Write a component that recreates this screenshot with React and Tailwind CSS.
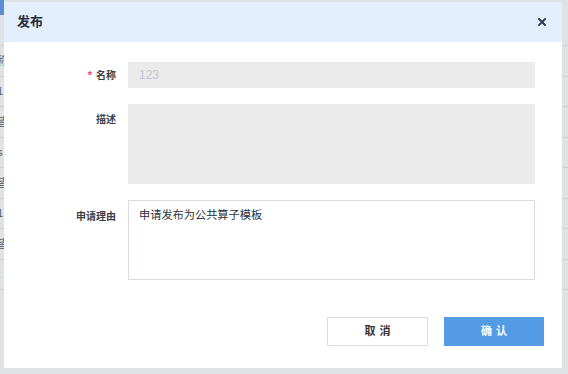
import React from "react";

const font = { fontFamily: '"Liberation Sans", "Noto Sans CJK SC", sans-serif' };

function BackgroundRows() {
  const rows = ["称", "1", "皆", "s", "皆", "1", "皆", "t"];
  return (
    <div className="flex flex-col pt-[45px]">
      {rows.map((t, i) => (
        <div
          key={i}
          className="h-[30.5px] border-t border-[#cfd1d5] flex items-center text-[11px] text-[#555]"
        >
          <span className="-ml-[3px]">{t}</span>
        </div>
      ))}
      <div className="border-t border-[#cfd1d5]" />
    </div>
  );
}

export default function App() {
  return (
    <div className="relative w-[568px] h-[374px] overflow-hidden bg-[#e1e2e4]" style={font}>
      <div className="absolute left-0 top-0 w-[4px] h-[15px] bg-[#5a8fd0]" />
      <BackgroundRows />

      <div className="absolute left-[4px] top-[2px] w-[558px] h-[366px] bg-white flex flex-col">
        <div className="h-[40px] shrink-0 bg-[#e3effd] flex items-center justify-between pl-[13px] pr-[16px]">
          <span className="text-[13px] font-bold text-[#1f2d3d]">发布</span>
          <svg width="8" height="8" viewBox="0 0 8 8" className="mt-[-1px]">
            <path d="M1 1 L7 7 M7 1 L1 7" stroke="#2a3550" strokeWidth="1.9" strokeLinecap="square" />
          </svg>
        </div>

        <div className="flex flex-col gap-[16px] pt-[20px] pr-[27px]">
          <div className="flex items-center">
            <div className="w-[112px] shrink-0 flex justify-end items-center text-[10px] font-bold text-[#3a3f4a]">
              <span className="text-[#f0407a] mr-[4px] text-[11px]">*</span>
              <span>名称</span>
            </div>
            <div className="ml-[12px] flex-1 h-[26px] bg-[#ebebeb] flex items-center px-[11px] text-[12px] text-[#c0c4d0]">
              123
            </div>
          </div>

          <div className="flex items-start">
            <div className="w-[112px] shrink-0 text-right text-[10px] font-bold text-[#3a3f4a] leading-[32px]">
              描述
            </div>
            <div className="ml-[12px] flex-1 h-[80px] bg-[#ebebeb]" />
          </div>

          <div className="flex items-start">
            <div className="w-[112px] shrink-0 text-right text-[10px] font-bold text-[#3a3f4a] leading-[33px]">
              申请理由
            </div>
            <div className="ml-[12px] flex-1 h-[80px] border border-[#d7dce8] px-[10px] pt-[7px] text-[11.2px] leading-[15px] text-[#2b2f38]">
              申请发布为公共算子模板
            </div>
          </div>
        </div>

        <div className="flex justify-end gap-[16px] pr-[18px] mt-[37px]">
          <button className="w-[101px] h-[29px] border border-[#d7dce8] bg-white text-[11px] font-bold text-[#333] tracking-[4px] pl-[4px]">
            取消
          </button>
          <button className="w-[100px] h-[29px] bg-[#549be6] text-[11px] font-bold text-white tracking-[4px] pl-[4px]">
            确认
          </button>
        </div>
      </div>
    </div>
  );
}
